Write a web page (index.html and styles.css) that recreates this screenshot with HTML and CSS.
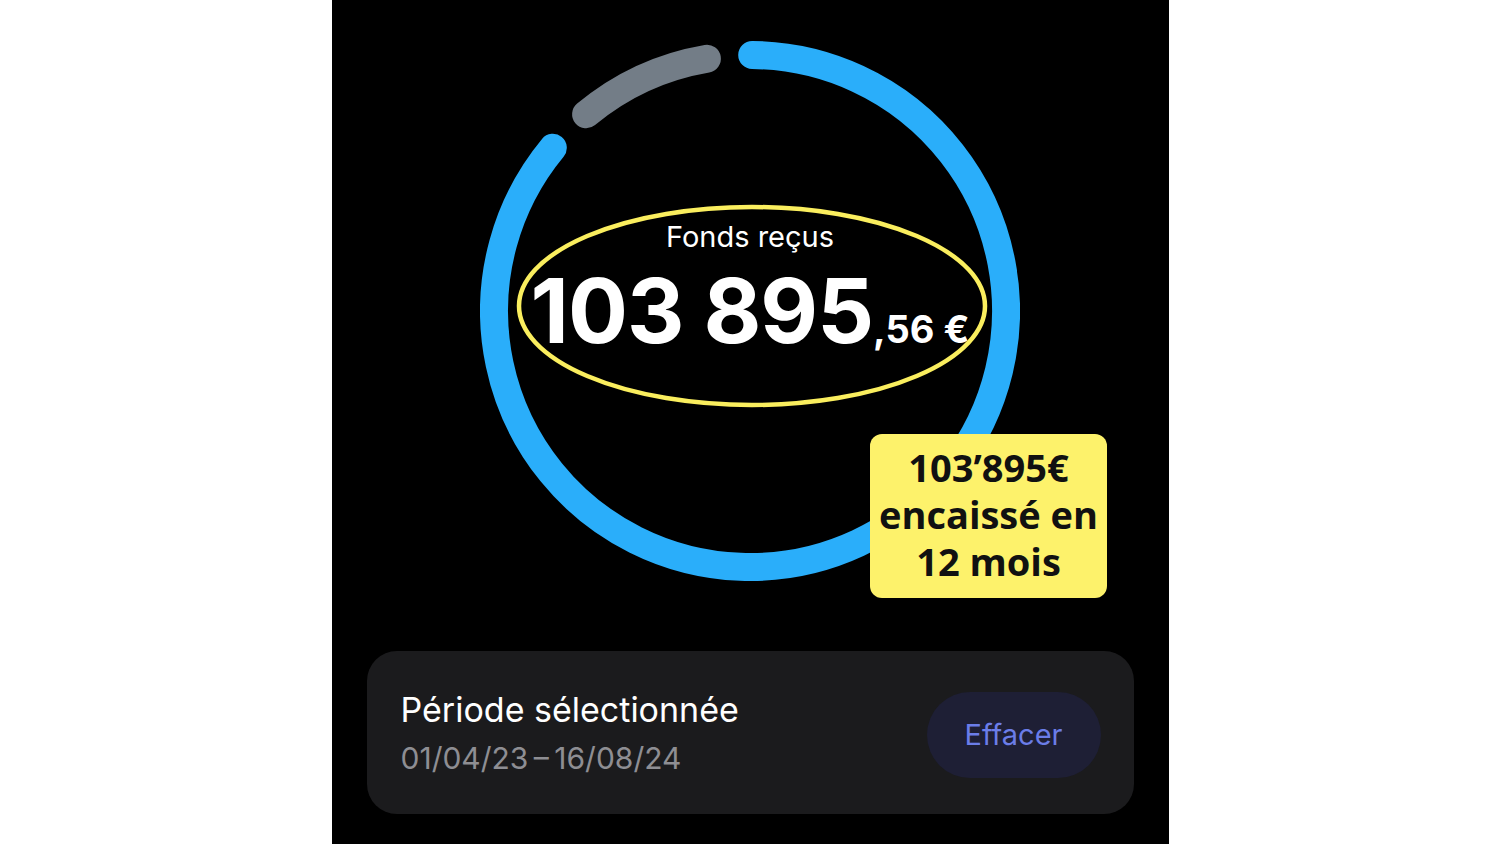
FILE: index.html
```html
<!DOCTYPE html>
<html>
<head>
  <title>Fonds reçus</title>
  <link rel="stylesheet" href="styles.css">
</head>
<body>
  <div class="panel">
    <div class="chart">
      <svg class="ring" width="540" height="540" viewBox="0 0 540 540">
        <path class="arc-blue" d="M272.2 14 A256 256 0 1 1 72.8 106.8"/>
        <path class="arc-gray" d="M106.1 73.3 A256 256 0 0 1 226.9 17.7"/>
        <ellipse class="mark" cx="272" cy="265" rx="233" ry="99"/>
      </svg>
      <div class="center">
        <p class="label">Fonds reçus</p>
        <p class="amount"><span class="int">103 895</span><span class="dec">,56 €</span></p>
      </div>
      <div class="note">103’895€<br>encaissé en<br>12 mois</div>
    </div>

    <div class="card">
      <div class="period">
        <p class="title">Période sélectionnée</p>
        <p class="dates">01/04/23&#8201;–&#8201;16/08/24</p>
      </div>
      <button type="button" class="clear">Effacer</button>
    </div>
  </div>
</body>
</html>
```

FILE: styles.css
```css
body{
  margin: 0;
  background-color: #fff;
  font-family: Inter, "Noto Sans", sans-serif;
}

.panel{
  width: 837px;
  height: 844px;
  margin: 0 auto;
  background-color: #000;
  padding-top: 41px;
  box-sizing: border-box;
  overflow: hidden;
}

.chart{
  position: relative;
  width: 540px;
  height: 540px;
  margin: 0 auto;
}

.ring{
  display: block;
}
.arc-blue{
  fill: none;
  stroke: #2aaefa;
  stroke-width: 28;
  stroke-linecap: round;
}
.arc-gray{
  fill: none;
  stroke: #737d87;
  stroke-width: 28;
  stroke-linecap: round;
}
.mark{
  fill: none;
  stroke: #faee5e;
  stroke-width: 4.5;
}

.center{
  position: absolute;
  left: 0;
  right: 0;
  top: 176px;
  text-align: center;
  color: #fff;
}
.center p{
  margin: 0;
}
.label{
  font-size: 29px;
  line-height: 40px;
  font-weight: 400;
}
.amount{
  margin-top: 4px !important;
  line-height: 100px;
  white-space: nowrap;
}
.int{
  font-size: 89px;
  font-weight: 700;
  letter-spacing: -1px;
}
.dec{
  font-size: 38px;
  font-weight: 700;
}

.note{
  position: absolute;
  left: 390px;
  top: 393px;
  width: 237px;
  height: 164px;
  box-sizing: border-box;
  padding-top: 10px;
  background-color: #fdf26b;
  border-radius: 12px;
  font-family: "Open Sans", sans-serif;
  font-weight: 700;
  font-size: 38px;
  line-height: 47px;
  text-align: center;
  color: #111;
}

.card{
  margin: 70px 35px 0;
  height: 163px;
  border-radius: 30px;
  background-color: #1b1b1d;
  display: flex;
  align-items: center;
  justify-content: space-between;
  padding: 0 33px 0 34px;
}
.period{
  margin-top: 4px;
}
.period p{
  margin: 0;
}
.title{
  color: #fff;
  font-size: 34px;
  line-height: 46px;
}
.dates{
  color: #8e8e93;
  font-size: 30px;
  line-height: 50px;
}
.clear{
  width: 174px;
  height: 86px;
  border: none;
  border-radius: 43px;
  background-color: #1e1f35;
  color: #6b7de8;
  font-family: Inter, sans-serif;
  font-size: 29px;
  margin-top: 4px;
}
```
